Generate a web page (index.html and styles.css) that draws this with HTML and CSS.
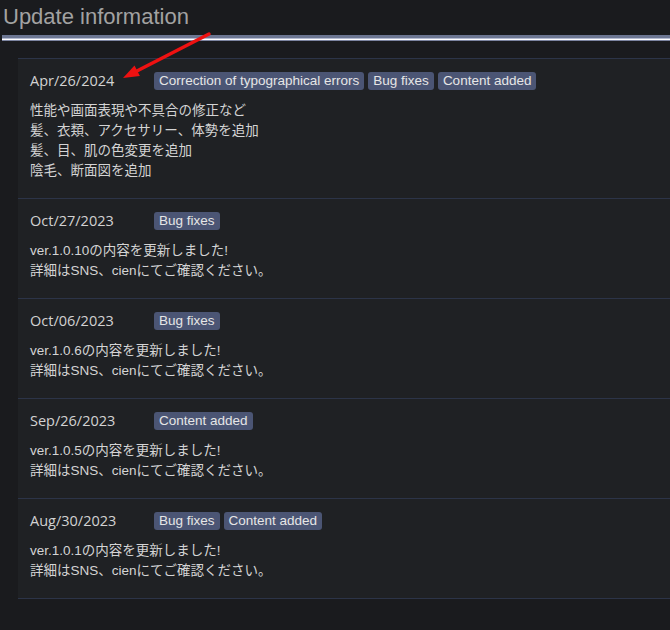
FILE: index.html
```html
<!DOCTYPE html>
<html lang="en">
<head>
    <meta charset="UTF-8">
    <title>Update information</title>
    <link rel="stylesheet" href="styles.css">
</head>
<body>
<header class="page-head">
    <h1>Update information</h1>
    <div class="head-rule"></div>
</header>

<!-- pointer drawn over the first entry -->
<svg class="pointer" width="670" height="100" viewBox="0 0 670 100">
    <line x1="209" y1="34" x2="133" y2="73" stroke="#ee1111" stroke-width="3.5" stroke-linecap="round"/>
    <polygon points="123,78 134.5,65.4 139.9,76" fill="#ee1111"/>
</svg>

<main class="updates">
    <section class="entry">
        <div class="entry-head">
            <span class="entry-date">Apr/26/2024</span>
            <span class="tag">Correction of typographical errors</span>
            <span class="tag">Bug fixes</span>
            <span class="tag">Content added</span>
        </div>
        <p>性能や画面表現や不具合の修正など<br>髪、衣類、アクセサリー、体勢を追加<br>髪、目、肌の色変更を追加<br>陰毛、断面図を追加</p>
    </section>
    <section class="entry">
        <div class="entry-head">
            <span class="entry-date">Oct/27/2023</span>
            <span class="tag">Bug fixes</span>
        </div>
        <p>ver.1.0.10の内容を更新しました!<br>詳細はSNS、cienにてご確認ください。</p>
    </section>
    <section class="entry">
        <div class="entry-head">
            <span class="entry-date">Oct/06/2023</span>
            <span class="tag">Bug fixes</span>
        </div>
        <p>ver.1.0.6の内容を更新しました!<br>詳細はSNS、cienにてご確認ください。</p>
    </section>
    <section class="entry">
        <div class="entry-head">
            <span class="entry-date">Sep/26/2023</span>
            <span class="tag">Content added</span>
        </div>
        <p>ver.1.0.5の内容を更新しました!<br>詳細はSNS、cienにてご確認ください。</p>
    </section>
    <section class="entry">
        <div class="entry-head">
            <span class="entry-date">Aug/30/2023</span>
            <span class="tag">Bug fixes</span>
            <span class="tag">Content added</span>
        </div>
        <p>ver.1.0.1の内容を更新しました!<br>詳細はSNS、cienにてご確認ください。</p>
    </section>
</main>
</body>
</html>
```

FILE: styles.css
```css
body {
    font-family: 'Liberation Sans', 'Noto Sans CJK JP', sans-serif;
    margin: 0;
    padding: 0;
    background: #1a1b1e;
    color: #d4d4d4;
    overflow: hidden;
    position: relative;
}

.page-head {
    padding-top: 2px;
}

.page-head h1 {
    margin: 0 0 3px 3px;
    font-size: 22px;
    font-weight: normal;
    line-height: 30px;
    color: #a2a2a2;
}

.head-rule {
    margin-left: 2px;
    height: 6px;
    background: linear-gradient(to bottom, #6c7692 0, #6c7692 3px, #b4bad0 3px, #b4bad0 4px, #ffffff 4px, #ffffff 5px, #7c84a0 5px);
}

.pointer {
    position: absolute;
    top: 0;
    left: 0;
    pointer-events: none;
}

.updates {
    margin: 17px 0 0 18px;
    background: #1f2124;
    border-top: 1px solid #2c3448;
}

.entry {
    padding: 12px 12px 17px;
    border-bottom: 1px solid #2c3448;
}

.entry-head {
    display: flex;
    align-items: center;
    gap: 4px;
    height: 20px;
    margin-bottom: 10px;
}

.entry-date {
    width: 120px;
    font-family: 'Open Sans', 'Liberation Sans', sans-serif;
    font-size: 14.5px;
    color: #d2d2d2;
    position: relative;
    top: -1px;
}

.tag {
    background: #4b5574;
    color: #e6e6e6;
    font-size: 13.5px;
    line-height: 18px;
    padding: 0 5px;
    border-radius: 3px;
}

.entry p {
    margin: 0;
    font-size: 13.5px;
    line-height: 20px;
}
```
